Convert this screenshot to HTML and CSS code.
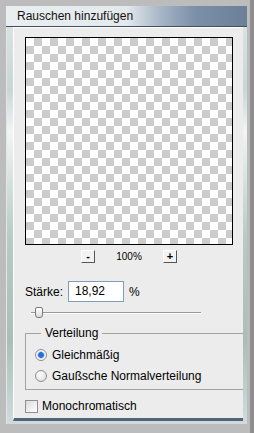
FILE: index.html
```html
<!DOCTYPE html>
<html lang="de">
<head>
  <meta charset="UTF-8">
  <title>Rauschen hinzufügen</title>
  <link rel="stylesheet" href="styles.css">
</head>
<body>
  <div class="window">
    <div class="frame">
      <div class="titlebar">Rauschen hinzufügen</div>
      <div class="panel">
        <div class="preview"></div>

        <div class="zoom-row">
          <span class="zoom-btn">-</span>
          <span class="zoom-value">100%</span>
          <span class="zoom-btn">+</span>
        </div>

        <div class="amount-row">
          <span class="amount-label">Stärke:</span>
          <span class="amount-input">18,92</span>
          <span class="amount-unit">%</span>
        </div>

        <div class="slider">
          <span class="slider-track"></span>
          <span class="slider-thumb"></span>
        </div>

        <div class="group">
          <span class="group-title">Verteilung</span>
          <div class="radio-row">
            <span class="radio checked"></span>
            <span>Gleichmäßig</span>
          </div>
          <div class="radio-row">
            <span class="radio"></span>
            <span>Gaußsche Normalverteilung</span>
          </div>
        </div>

        <div class="check-row">
          <span class="checkbox"></span>
          <span>Monochromatisch</span>
        </div>
      </div>
    </div>
  </div>
</body>
</html>
```

FILE: styles.css
```css
/* Basic styling */
body {
  margin: 0;
  padding: 0;
  font-family: "Liberation Sans", Arial, sans-serif;
  font-size: 12px;
  color: #000;
  background-color: #b9b9b9;
}

.window {
  width: 254px;
  height: 433px;
  box-sizing: border-box;
  padding: 6px 3px 9px 6px;
  background-color: #bcbcbc;
  border-right: 4px solid #8e8e8e;
}

.frame {
  height: 100%;
  box-sizing: border-box;
  display: flex;
  flex-direction: column;
  padding: 0 3px 3px 2px;
  border-left: 1px solid #e2e6e6;
  background: linear-gradient(to bottom, #dfe6e6 0%, #c9d6d4 20%, #f2f5f4 30%, #b8cbc4 55%, #a9bfb6 80%, #cfdcdb 100%);
}

.titlebar {
  height: 20px;
  margin-left: -3px;
  margin-right: -3px;
  padding-left: 11px;
  line-height: 20px;
  font-size: 12px;
  color: #111;
  border-bottom: 1px solid #3f4f64;
  background: linear-gradient(to right, #e9eef0 0%, #e4e9ec 50%, #a7b6c6 64%, #7d90aa 78%, #6b7f99 100%);
}

/* main dialog area */
.panel {
  flex: 1;
  display: flex;
  flex-direction: column;
  margin-left: 4px;
  margin-right: 1px;
  border-top: 1px solid #fff;
  border-left: 1px solid #fff;
  border-bottom: 3px solid #51647c;
  background-color: #ececec;
}

.preview {
  width: 206px;
  height: 206px;
  margin: 9px 0 0 11px;
  border: 1px solid #000;
  background: repeating-conic-gradient(#cccccc 0 25%, #ffffff 0 50%) 0 0 / 16px 16px;
}

.zoom-row {
  display: flex;
  align-items: center;
  justify-content: center;
  width: 208px;
  margin: 5px 0 0 11px;
  height: 13px;
}

.zoom-btn {
  width: 12px;
  height: 11px;
  line-height: 10px;
  text-align: center;
  font-size: 11px;
  font-weight: bold;
  background-color: #f2f2f2;
  border-top: 1px solid #fff;
  border-left: 1px solid #fff;
  border-right: 1px solid #555;
  border-bottom: 1px solid #555;
}

.zoom-value {
  width: 68px;
  text-align: center;
  font-size: 10px;
}

.amount-row {
  display: flex;
  align-items: center;
  margin: 18px 0 0 11px;
  height: 21px;
}

.amount-label {
  width: 43px;
  font-size: 12px;
}

.amount-input {
  width: 48px;
  height: 19px;
  line-height: 19px;
  padding-left: 6px;
  font-size: 12px;
  background-color: #fff;
  border: 1px solid #7f9db9;
}

.amount-unit {
  margin-left: 5px;
  font-size: 12px;
}

.slider {
  position: relative;
  height: 11px;
  margin: 5px 0 0 17px;
  width: 170px;
}

.slider-track {
  display: block;
  margin-top: 5px;
  height: 1px;
  background-color: #9a9a9a;
  border-bottom: 1px solid #fff;
}

.slider-thumb {
  position: absolute;
  left: 4px;
  top: 0;
  width: 6px;
  height: 9px;
  border: 1px solid #7a7a7a;
  border-radius: 2px 2px 3px 3px;
  background: linear-gradient(to bottom, #ffffff, #dcdcdc);
}

/* Verteilung group box */
.group {
  position: relative;
  margin: 15px 0 0 11px;
  padding: 14px 0 2px 9px;
  height: 39px;
  border-top: 1px solid #a3a3a3;
  border-left: 1px solid #a3a3a3;
  border-bottom: 1px solid #a3a3a3;
  display: flex;
  flex-direction: column;
  gap: 8px;
}

.group-title {
  position: absolute;
  left: 15px;
  top: -8px;
  padding: 0 4px;
  font-size: 12px;
  background-color: #ececec;
}

.radio-row {
  display: flex;
  align-items: center;
  gap: 5px;
  height: 13px;
  font-size: 12px;
}

.radio {
  width: 10px;
  height: 10px;
  border-radius: 50%;
  border: 1px solid #8f8f8f;
  background: radial-gradient(circle at 40% 35%, #ffffff, #d6d6d6);
}

.radio.checked {
  background: radial-gradient(circle, #2a6fd6 0 2.5px, #7fb2ee 3px, #ffffff 4px, #e0e0e0 100%);
}

.check-row {
  display: flex;
  align-items: center;
  gap: 4px;
  margin: 9px 0 0 11px;
  font-size: 12px;
}

.checkbox {
  width: 11px;
  height: 11px;
  border: 1px solid #8f8f8f;
  background: linear-gradient(135deg, #dcdcdc, #ffffff);
}
```
